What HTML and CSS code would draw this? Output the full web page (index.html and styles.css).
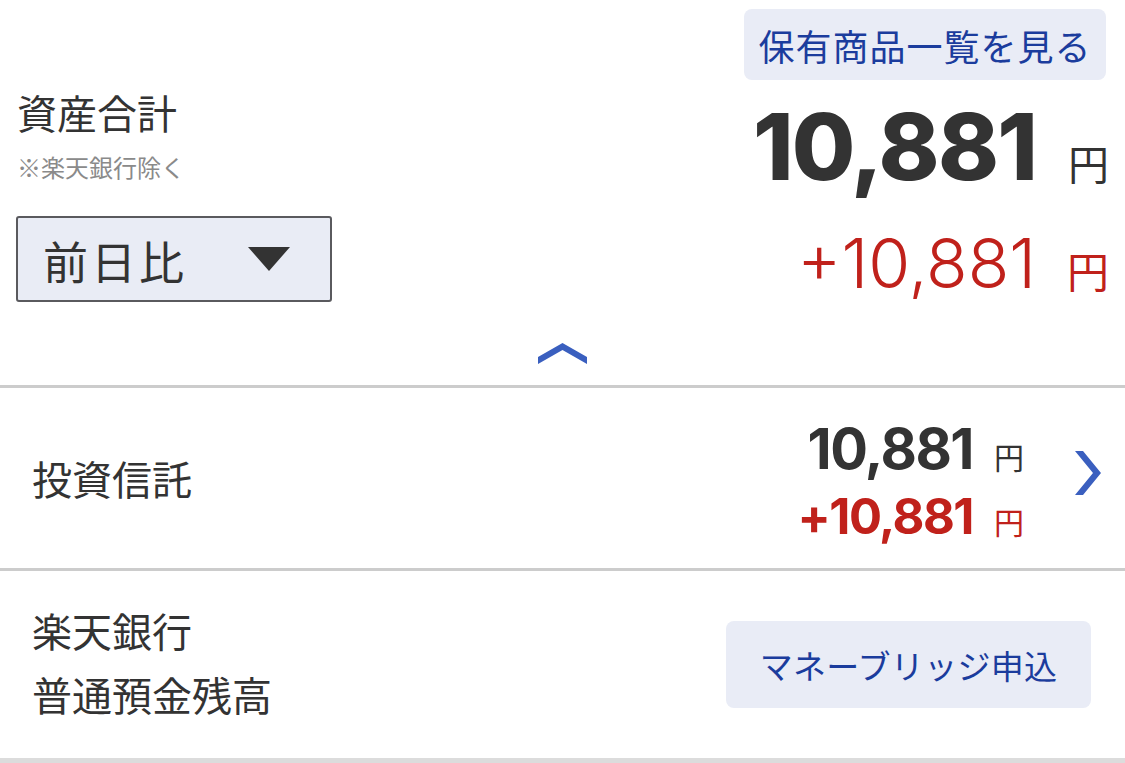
FILE: index.html
```html
<!DOCTYPE html>
<html lang="ja">
<head>
<meta charset="utf-8">
<link rel="stylesheet" href="styles.css">
</head>
<body>
<div class="page">
  <section class="summary">
    <div class="left">
      <div class="title">資産合計</div>
      <div class="note">※楽天銀行除く</div>
      <div class="select">
        <span class="select-label">前日比</span>
        <svg class="tri" width="42" height="24" viewBox="0 0 42 24"><polygon points="0,0 42,0 21,24" fill="#333"/></svg>
      </div>
    </div>
    <div class="right">
      <div class="btn btn-top">保有商品一覧を見る</div>
      <div class="total"><span class="total-num">10,881</span><span class="yen-big">円</span></div>
      <div class="diff"><span class="diff-num">+10,881</span><span class="yen-red">円</span></div>
    </div>
  </section>
  <div class="collapse">
    <svg width="49" height="21" viewBox="0 0 49 21"><polygon points="0,14 24.5,0 49,14 49,21 24.5,7 0,21" fill="#3a5fbf"/></svg>
  </div>
  <div class="row row-fund">
    <div class="row-label">投資信託</div>
    <div class="row-values">
      <div class="val"><span class="val-num">10,881</span><span class="val-yen">円</span></div>
      <div class="val red"><span class="val-num val-num-red">+10,881</span><span class="val-yen">円</span></div>
    </div>
    <svg class="chev" width="26" height="44" viewBox="0 0 26 44"><polygon points="0,0 8,0 26,22 8,44 0,44 18,22" fill="#3a5fbf"/></svg>
  </div>
  <div class="row row-bank">
    <div class="row-label bank-label">楽天銀行<br>普通預金残高</div>
    <div class="btn btn-bridge">マネーブリッジ申込</div>
  </div>
  <div class="footer-bar"></div>
</div>
</body>
</html>
```

FILE: styles.css
```css
html, body {
  margin: 0;
  padding: 0;
  background: #fff;
}
body {
  font-family: "Noto Sans CJK JP", "Noto Sans", sans-serif;
  color: #333;
}
.page {
  width: 1125px;
  height: 763px;
  overflow: hidden;
  display: flex;
  flex-direction: column;
}
.summary {
  display: flex;
  justify-content: space-between;
  padding: 9px 16px 0 16px;
}
.left {
  padding-top: 78px;
}
.title {
  font-size: 40px;
  line-height: 50px;
  padding-left: 1px;
}
.note {
  font-size: 24px;
  line-height: 32px;
  color: #8a8a8a;
  margin-top: 14px;
  padding-left: 1px;
}
.select {
  margin-top: 33px;
  width: 316px;
  height: 86px;
  box-sizing: border-box;
  border: 2px solid #5a5a5e;
  border-radius: 3px;
  background: #e9ecf5;
  display: flex;
  align-items: center;
  padding-left: 25px;
}
.select-label {
  font-size: 45px;
  line-height: 50px;
  letter-spacing: 3px;
  color: #333;
  margin-top: 4px;
}
.tri {
  margin-left: auto;
  margin-right: 40px;
}
.right {
  display: flex;
  flex-direction: column;
  align-items: flex-end;
}
.btn {
  background: #e9ecf6;
  color: #1b3c9d;
  border-radius: 8px;
  display: flex;
  align-items: center;
  justify-content: center;
}
.btn-top {
  width: 362px;
  height: 71px;
  font-size: 36px;
  letter-spacing: 1px;
  margin-right: 3px;
}
.total {
  display: flex;
  align-items: baseline;
  margin-top: 17px;
  height: 100px;
}
.total-num {
  font-family: "Inter", "Noto Sans", sans-serif;
  font-weight: 800;
  font-size: 92px;
  line-height: 100px;
  letter-spacing: -1.8px;
  color: #333;
}
.yen-big {
  font-size: 41px;
  margin-left: 32px;
  color: #333;
}
.diff {
  display: flex;
  align-items: baseline;
  color: #c0211b;
  margin-top: 26px;
  height: 80px;
}
.diff-num {
  font-family: "Inter", "Noto Sans", sans-serif;
  font-weight: 300;
  font-size: 68px;
  line-height: 80px;
}
.yen-red {
  font-size: 42px;
  margin-left: 31px;
}
.collapse {
  display: flex;
  justify-content: center;
  padding-top: 40px;
  height: 85px;
  box-sizing: border-box;
  border-bottom: 3px solid #cccccc;
}
.row {
  display: flex;
  align-items: center;
  padding: 0 24px 0 32px;
  border-bottom: 3px solid #cccccc;
}
.row-fund {
  height: 183px;
  box-sizing: border-box;
}
.row-label {
  font-size: 40px;
  line-height: 64px;
  color: #333;
  flex: 1;
}
.row-values {
  display: flex;
  flex-direction: column;
  align-items: flex-end;
  padding-top: 10px;
}
.val {
  display: flex;
  align-items: baseline;
  height: 64px;
}
.val + .val {
  margin-top: 4px;
}
.val-num {
  font-family: "Inter", "Noto Sans", sans-serif;
  font-weight: 700;
  font-size: 56px;
  line-height: 64px;
  letter-spacing: -1.5px;
}
.val-num-red {
  font-size: 49px;
}
.val-yen {
  font-size: 30px;
  margin-left: 21px;
}
.red {
  color: #c0211b;
}
.chev {
  margin-left: 51px;
  margin-bottom: 10px;
}
.row-bank {
  height: 187px;
  box-sizing: border-box;
  border-bottom: none;
  padding-right: 34px;
}
.bank-label {
  margin-top: -6px;
}
.btn-bridge {
  width: 365px;
  height: 87px;
  font-size: 33px;
  letter-spacing: 0.3px;
}
.footer-bar {
  flex: 1;
  background: #dcdcdc;
}
```
